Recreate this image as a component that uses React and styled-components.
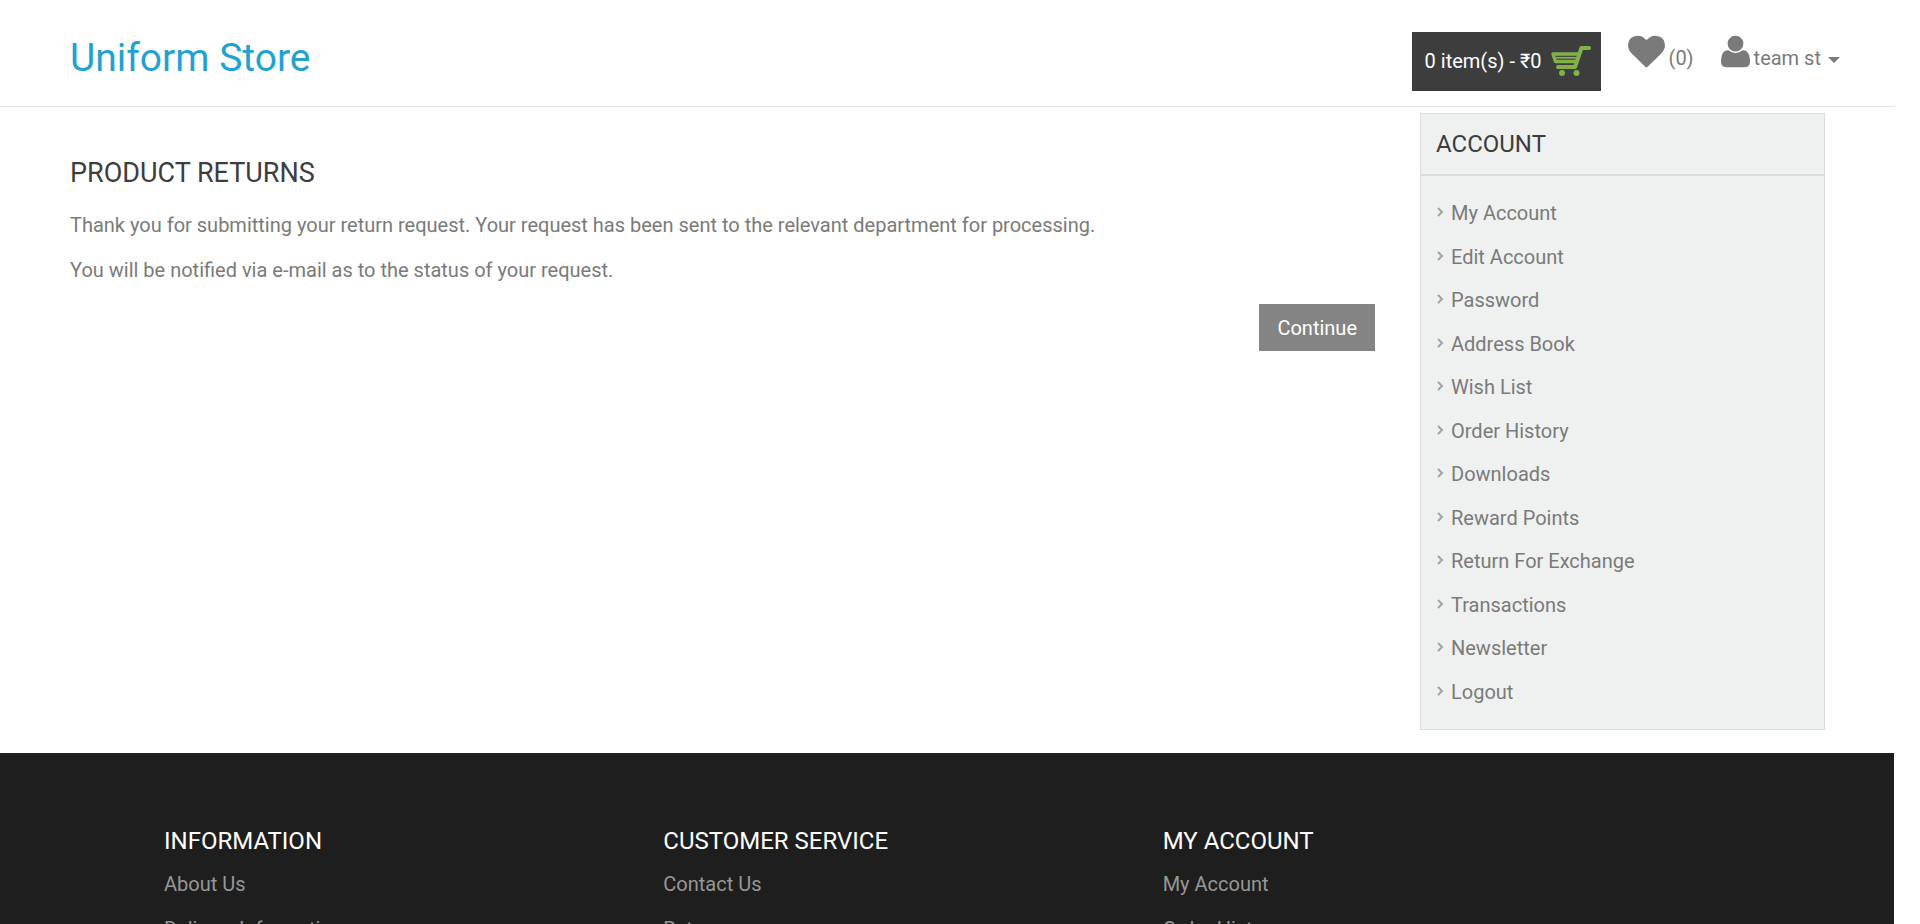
import React from "react";
import styled, { createGlobalStyle } from "styled-components";

const GlobalStyle = createGlobalStyle`
  *, *::before, *::after { box-sizing: border-box; }
  body {
    margin: 0;
    background: #fff;
    color: #7a7a7a;
    font-family: Roboto, "Liberation Sans", sans-serif;
    font-size: 20px;
    line-height: 28px;
  }
  h1, h2, p, ul { margin: 0; padding: 0; }
  h1, h2 { font-weight: 400; }
  ul { list-style: none; }
  a { color: inherit; text-decoration: none; }
  svg { display: block; flex: none; }
`;

const Page = styled.div`
  margin-right: 26px;
`;

const Header = styled.header`
  display: flex;
  justify-content: space-between;
  align-items: flex-start;
  height: 107px;
  padding: 32px 54px 0 70px;
  border-bottom: 1px solid #e5e5e5;
`;

const Brand = styled.a`
  color: #23a1d1;
  font-size: 39px;
  line-height: 52px;
`;

const Tools = styled.div`
  display: flex;
  align-items: flex-start;
`;

const CartButton = styled.button`
  display: flex;
  align-items: center;
  gap: 8px;
  height: 59px;
  padding: 0 9px 2px 13px;
  border: 0;
  background: #3d3d3d;
  color: #fff;
  font: inherit;
  cursor: pointer;
`;

const ToolLink = styled.a`
  display: flex;
  align-items: flex-start;
  gap: 4px;
  margin-left: 27px;
  padding-top: 1px;
`;

const ToolButton = styled.button`
  display: flex;
  align-items: flex-start;
  gap: 4px;
  margin-left: 27px;
  padding: 1px 0 0;
  border: 0;
  background: none;
  color: inherit;
  font: inherit;
  cursor: pointer;
`;

const ToolText = styled.span`
  padding-top: 11px;
`;

const Caret = styled.span`
  margin: 24px 0 0 3px;
  border: 6px solid transparent;
  border-top-color: currentColor;
  border-bottom: 0;
`;

const Main = styled.div`
  display: flex;
  gap: 45px;
  min-height: 646px;
  padding: 6px 69px 23px 70px;
`;

const Content = styled.main`
  flex: 1;
`;

const PageTitle = styled.h1`
  margin: 42px 0 20px;
  color: #3d3d3d;
  font-size: 27px;
  line-height: 36px;
`;

const Paragraph = styled.p`
  margin-bottom: 17px;
`;

const Actions = styled.div`
  display: flex;
  justify-content: flex-end;
  padding-top: 3px;
`;

const ContinueLink = styled.a`
  padding: 10px 18px 9px;
  background: #848484;
  color: #fff;
`;

const Sidebar = styled.aside`
  display: flex;
  flex-direction: column;
  flex: 0 0 23%;
  min-width: 405px;
  border: 1px solid #d9dddc;
  background: #eff1f1;
`;

const SidebarTitle = styled.h2`
  padding: 14px 15px;
  border-bottom: 2px solid #d9dddc;
  color: #3d3d3d;
  font-size: 24px;
  line-height: 32px;
`;

const AccountList = styled.ul`
  display: flex;
  flex: 1;
  flex-direction: column;
  justify-content: space-between;
  padding: 23px 16px;
`;

const AccountLink = styled.a`
  display: flex;
  align-items: center;
  gap: 7px;
`;

const Footer = styled.footer`
  display: grid;
  grid-template-columns: repeat(3, 1fr);
  padding: 72px 232px 40px 164px;
  background: #1e1e1e;
  color: #979797;
`;

const FooterTitle = styled.h2`
  margin-bottom: 13px;
  color: #fff;
  font-size: 24px;
  line-height: 32px;
`;

const FooterList = styled.ul`
  display: flex;
  flex-direction: column;
  gap: 17px;
`;

const FA_HEART =
  "M896 1664q-26 0-44-18l-624-602q-10-8-27.5-26t-55.5-65.5-68-97.5-53.5-121-23.5-138q0-220 127-344t351-124q62 0 126.5 21.5t120 58 95.5 68.5 76 68q36-36 76-68t95.5-68.5 120-58 126.5-21.5q224 0 351 124t127 344q0 221-229 450l-623 600q-18 18-44 18z";
const FA_USER =
  "M1600 1405q0 120-73 189.5t-194 69.5h-874q-121 0-194-69.5t-73-189.5q0-53 3.5-103.5t14-109 26.5-108.5 43-97.5 62-81 85.5-53.5 111.5-20q9 0 42 21.5t74.5 48 108 48 133.5 21.5 133.5-21.5 108-48 74.5-48 42-21.5q61 0 111.5 20t85.5 53.5 62 81 43 97.5 26.5 108.5 14 109 3.5 103.5zm-320-893q0 159-112.5 271.5t-271.5 112.5-271.5-112.5-112.5-271.5 112.5-271.5 271.5-112.5 271.5 112.5 112.5 271.5z";

const HeartIcon = () => (
  <svg width="37" height="37" viewBox="0 0 1792 1792" fill="currentColor" aria-hidden="true">
    <path d={FA_HEART} />
  </svg>
);

const UserIcon = () => (
  <svg width="29" height="37" viewBox="192 0 1408 1792" fill="currentColor" aria-hidden="true">
    <path d={FA_USER} />
  </svg>
);

const CartIcon = () => (
  <svg width="42" height="32" viewBox="0 0 42 32" fill="none" stroke="#82b04a" aria-hidden="true">
    <path d="M39 3h-7.500l-6.500 19H8" strokeWidth="4" strokeLinecap="round" strokeLinejoin="round" />
    <path d="M29 9H3l2.500 7.500H26" strokeWidth="3.400" strokeLinecap="round" strokeLinejoin="round" />
    <path d="M6 12.800h21" strokeWidth="1.800" />
    <circle cx="12" cy="28" r="3" fill="#82b04a" stroke="none" />
    <circle cx="26.500" cy="28" r="3" fill="#82b04a" stroke="none" />
  </svg>
);

const Chevron = () => (
  <svg width="7" height="12" viewBox="0 0 7 12" fill="none" stroke="#a3a3a3" strokeWidth="2" aria-hidden="true">
    <path d="M1 1l4 4-4 4" />
  </svg>
);

const accountLinks = [
  "My Account",
  "Edit Account",
  "Password",
  "Address Book",
  "Wish List",
  "Order History",
  "Downloads",
  "Reward Points",
  "Return For Exchange",
  "Transactions",
  "Newsletter",
  "Logout",
];

const footerColumns = [
  { title: "INFORMATION", links: ["About Us", "Delivery Information"] },
  { title: "CUSTOMER SERVICE", links: ["Contact Us", "Returns"] },
  { title: "MY ACCOUNT", links: ["My Account", "Order History"] },
];

export default function App() {
  return (
    <Page>
      <GlobalStyle />
      <Header>
        <Brand href="#">Uniform Store</Brand>
        <Tools>
          <CartButton type="button">
            0 item(s) - ₹0
            <CartIcon />
          </CartButton>
          <ToolLink href="#" aria-label="Wish List (0)">
            <HeartIcon />
            <ToolText>(0)</ToolText>
          </ToolLink>
          <ToolButton type="button">
            <UserIcon />
            <ToolText>team st</ToolText>
            <Caret />
          </ToolButton>
        </Tools>
      </Header>
      <Main>
        <Content>
          <PageTitle>PRODUCT RETURNS</PageTitle>
          <Paragraph>
            Thank you for submitting your return request. Your request has been sent to the relevant
            department for processing.
          </Paragraph>
          <Paragraph>You will be notified via e-mail as to the status of your request.</Paragraph>
          <Actions>
            <ContinueLink href="#">Continue</ContinueLink>
          </Actions>
        </Content>
        <Sidebar>
          <SidebarTitle>ACCOUNT</SidebarTitle>
          <AccountList>
            {accountLinks.map((label) => (
              <li key={label}>
                <AccountLink href="#">
                  <Chevron />
                  {label}
                </AccountLink>
              </li>
            ))}
          </AccountList>
        </Sidebar>
      </Main>
      <Footer>
        {footerColumns.map(({ title, links }) => (
          <section key={title}>
            <FooterTitle>{title}</FooterTitle>
            <FooterList>
              {links.map((label) => (
                <li key={label}>
                  <a href="#">{label}</a>
                </li>
              ))}
            </FooterList>
          </section>
        ))}
      </Footer>
    </Page>
  );
}
